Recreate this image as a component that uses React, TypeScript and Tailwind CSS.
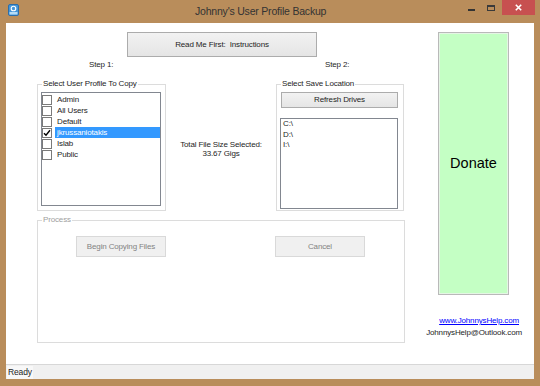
import React from "react";

const btn =
  "bg-linear-to-b from-[#f2f2f2] to-[#e5e5e5] border border-[#acacac] flex items-center justify-center";
const btnDisabled =
  "bg-[#f0f0f0] border border-[#d9d9d9] text-[#838383] flex items-center justify-center";

function Group({
  label,
  className,
  labelClass,
  children,
}: {
  label: string;
  className: string;
  labelClass?: string;
  children?: React.ReactNode;
}) {
  return (
    <div className={`relative border border-[#dcdcdc] ${className}`}>
      <span
        className={`absolute left-[4px] top-[-6px] bg-white px-[1px] leading-[10px] whitespace-nowrap ${labelClass ?? ""}`}
      >
        {label}
      </span>
      {children}
    </div>
  );
}

function Check() {
  return (
    <svg width="8" height="8" viewBox="0 0 8 8">
      <path d="M1 4.2 L3 6.3 L7 1.3" fill="none" stroke="#000" strokeWidth="1.4" />
    </svg>
  );
}

export default function App() {
  const users = [
    { name: "Admin", checked: false, selected: false },
    { name: "All Users", checked: false, selected: false },
    { name: "Default", checked: false, selected: false },
    { name: "jkrussaniotakis", checked: true, selected: true },
    { name: "Islab", checked: false, selected: false },
    { name: "Public", checked: false, selected: false },
  ];
  const drives = ["C:\\", "D:\\", "I:\\"];

  return (
    <div className="w-[540px] h-[386px] bg-[#b98d5b] flex flex-col overflow-hidden font-['Liberation_Sans',Arial,sans-serif] text-[8px] tracking-[-0.15px] text-[#1e1e1e]">
      {/* Title bar */}
      <div className="h-[23px] flex items-start shrink-0">
        <svg className="ml-[8px] mt-[4px] shrink-0" width="11" height="12" viewBox="0 0 11 12">
          <rect x="0.5" y="0.5" width="10" height="11" rx="1.5" fill="#4596d8" stroke="#2c6eaa" />
          <rect x="1.5" y="8" width="8" height="2.5" fill="#b5dcf7" />
          <circle cx="5.5" cy="4.5" r="2.3" fill="none" stroke="#ffffff" strokeWidth="1.1" />
          <path d="M7.6 3.2 L8.2 4.8 L6.7 4.4 Z" fill="#ffffff" />
        </svg>
        <div className="ml-[176px] mt-[4px] w-[140px] shrink-0 text-[10.5px] leading-[14px] tracking-[-0.2px] text-[#333333] whitespace-nowrap">
          Johnny's User Profile Backup
        </div>
        <div className="flex-1" />
        <div className="shrink-0 mt-[9px] w-[7px] h-[2px] bg-[#333333]" />
        <div className="shrink-0 ml-[12px] mt-[5px] w-[8px] h-[6px] border border-[#3a3a3a] border-t-2" />
        <div className="shrink-0 ml-[7px] mr-[5px] w-[33px] h-[15px] bg-[#c75050] flex items-center justify-center">
          <svg width="7" height="7" viewBox="0 0 7 7">
            <path d="M0.8 0.8 L6.2 6.2 M6.2 0.8 L0.8 6.2" stroke="#ffffff" strokeWidth="1.6" />
          </svg>
        </div>
      </div>

      {/* Client area */}
      <div className="mx-[6px] h-[341px] bg-white flex shrink-0">
        {/* Left column */}
        <div className="ml-[31px] w-[369px] flex flex-col pt-[9px]">
          <div className={`ml-[90px] w-[190px] h-[25px] ${btn}`}>Read Me First:&nbsp; Instructions</div>
          <div className="mt-[3px] h-[10px] leading-[10px] flex whitespace-nowrap">
            <span className="ml-[52px] w-[236px]">Step 1:</span>
            <span>Step 2:</span>
          </div>

          <div className="mt-[14px] flex">
            <Group label="Select User Profile To Copy" className="w-[129px] h-[127px] pt-[7px] pl-[3px]">
              <div className="w-[120px] h-[114px] border border-[#828790] pt-[1px]">
                {users.map((u) => (
                  <div key={u.name} className="h-[11px] flex items-center">
                    <div className="w-[10px] h-[10px] border border-[#7a7a7a] bg-white flex items-center justify-center shrink-0">
                      {u.checked && <Check />}
                    </div>
                    <div
                      className={`ml-[3px] flex-1 h-[11px] pl-[2px] leading-[11px] whitespace-nowrap ${
                        u.selected ? "bg-[#3399ff] text-white" : ""
                      }`}
                    >
                      {u.name}
                    </div>
                  </div>
                ))}
              </div>
            </Group>

            <div className="w-[110px] pt-[56px] text-center leading-[9px]">
              <div>Total File Size Selected:</div>
              <div>33.67 Gigs</div>
            </div>

            <Group label="Select Save Location" className="w-[128px] h-[127px] pt-[7px] pl-[3px]">
              <div className={`ml-[1px] w-[117px] h-[16px] ${btn}`}>Refresh Drives</div>
              <div className="mt-[10px] w-[118px] h-[91px] border border-[#828790] pl-[2px] leading-[10.5px]">
                {drives.map((d) => (
                  <div key={d}>{d}</div>
                ))}
              </div>
            </Group>
          </div>

          <Group
            label="Process"
            labelClass="text-[#a0a0a0]"
            className="mt-[9px] w-[368px] h-[123px] pt-[15px] pl-[38px] flex items-start"
          >
            <div className={`w-[90px] h-[21px] ${btnDisabled}`}>Begin Copying Files</div>
            <div className={`ml-[109px] w-[90px] h-[21px] ${btnDisabled}`}>Cancel</div>
          </Group>
        </div>

        {/* Right column */}
        <div className="ml-[18px] w-[98px] pt-[9px] flex flex-col">
          <div className="ml-[14px] w-[71px] h-[263px] bg-[#c4ffc4] border border-[#b9b9b9] shadow-[inset_0_0_0_1px_#e4f5e4] flex items-center justify-center text-[14.5px] tracking-normal text-black">
            Donate
          </div>
          <div className="mt-[20px] text-right leading-[12px] whitespace-nowrap">
            <div className="mr-[3px] text-[#0000ff] underline">www.JohnnysHelp.com</div>
            <div>JohnnysHelp@Outlook.com</div>
          </div>
        </div>
      </div>

      {/* Status bar */}
      <div className="mx-[6px] h-[15px] bg-[#f0f0f0] border-t border-[#d7d7d7] flex items-center shrink-0">
        <div className="ml-[1px] h-[13px] px-[1px] bg-[#f8f8f8] leading-[13px] text-[8.5px]">Ready</div>
      </div>
    </div>
  );
}
